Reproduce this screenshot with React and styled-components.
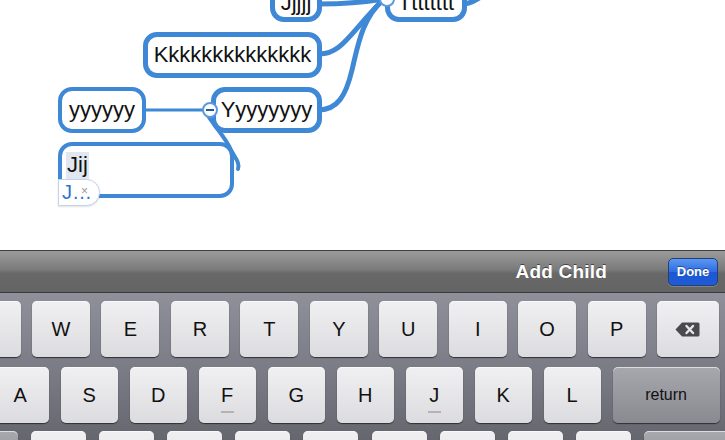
import React from 'react'
import styled, { createGlobalStyle } from 'styled-components'

const GlobalStyle = createGlobalStyle`
  html, body {
    margin: 0;
    padding: 0;
    background: #fff;
    overflow: hidden;
  }
  body {
    font-family: "Liberation Sans", Arial, sans-serif;
  }
`

const BLUE = '#3f88d6'

const Screen = styled.div`
  width: 725px;
  height: 440px;
  display: flex;
  flex-direction: column;
  overflow: hidden;
`

/* ---------- mind map ---------- */

const Canvas = styled.div`
  position: relative;
  height: 250px;
  flex: none;
  background: #fff;
  overflow: hidden;
`

const Wires = styled.svg`
  position: absolute;
  left: 0;
  top: 0;
`

const Node = styled.div`
  position: absolute;
  left: ${p => p.$x}px;
  top: ${p => p.$y}px;
  width: ${p => p.$w}px;
  height: ${p => p.$h}px;
  box-sizing: border-box;
  border: ${p => p.$bw || 5}px solid ${BLUE};
  border-radius: 14px;
  background: #fff;
  display: flex;
  align-items: center;
  justify-content: center;
  font-size: 22px;
  color: #111;
  white-space: nowrap;
`

const EditNode = styled(Node)`
  align-items: flex-start;
  justify-content: flex-start;
  padding: 6px 0 0 4px;
`

const Marked = styled.span`
  background: #e1e7f0;
  padding: 2px 1px 4px;
  line-height: 22px;
`

const Suggestion = styled.div`
  position: absolute;
  left: 58px;
  top: 179px;
  width: 42px;
  height: 27px;
  box-sizing: border-box;
  background: #fff;
  border: 1px solid #c3d3ee;
  border-radius: 0 14px 14px 0;
  box-shadow: 0 1px 2px rgba(0, 0, 0, 0.12);
  color: #2a74d2;
  font-size: 20px;
  padding: 1px 0 0 3px;
  white-space: nowrap;
`

const Dismiss = styled.span`
  position: absolute;
  left: 22px;
  top: 4px;
  font-size: 12px;
  color: #9a9a9a;
`

const Collapse = styled.div`
  position: absolute;
  left: ${p => p.$x - 8}px;
  top: ${p => p.$y - 8}px;
  width: 16px;
  height: 16px;
  box-sizing: border-box;
  border-radius: 50%;
  background: #fff;
  border: 2px solid #5a9ae0;
  &::after {
    content: '';
    position: absolute;
    left: 2px;
    top: 5px;
    width: 8px;
    height: 2px;
    background: #22599a;
  }
`

/* ---------- toolbar ---------- */

const Toolbar = styled.div`
  height: 43px;
  flex: none;
  box-sizing: border-box;
  border-top: 1px solid #3e3e3e;
  border-bottom: 1px solid #3a3a3a;
  background: linear-gradient(#9b9b9b, #7b7b7b 45%, #686868 55%, #646464);
  display: flex;
  align-items: center;
  justify-content: flex-end;
  padding-right: 7px;
`

const Title = styled.div`
  color: #fff;
  font-weight: bold;
  font-size: 19px;
  letter-spacing: 0.2px;
  text-shadow: 0 -1px 0 rgba(0, 0, 0, 0.5);
  margin-right: 61px;
`

const DoneButton = styled.button`
  width: 50px;
  height: 28px;
  box-sizing: border-box;
  border: 1px solid #233f73;
  border-radius: 5px;
  background: linear-gradient(#5c97f3, #2d6be0 50%, #1c58d2 51%, #1e5bd6);
  color: #fff;
  font-family: "Liberation Sans", Arial, sans-serif;
  font-weight: bold;
  font-size: 13px;
  text-shadow: 0 -1px 0 rgba(0, 0, 0, 0.4);
  padding: 0;
  box-shadow: 0 1px 0 rgba(255, 255, 255, 0.2);
`

/* ---------- keyboard ---------- */

const Keyboard = styled.div`
  flex: 1;
  background: linear-gradient(#8f909a, #777881 60%, #65666e);
  padding-top: 8px;
  display: flex;
  flex-direction: column;
  overflow: hidden;
`

const Row = styled.div`
  display: flex;
  gap: ${p => p.$gap}px;
  margin-left: ${p => p.$offset}px;
  margin-bottom: ${p => p.$after}px;
  flex: none;
`

const Key = styled.div`
  position: relative;
  flex: none;
  width: ${p => p.$w}px;
  height: 56px;
  box-sizing: border-box;
  border-radius: 5px;
  background: ${p => p.$dark
    ? 'linear-gradient(#a7a8ae, #898a90)'
    : 'linear-gradient(#f0f0f2, #dcdce0)'};
  box-shadow: 0 1px 1px #303034, inset 0 1px 0 rgba(255, 255, 255, 0.6);
  display: flex;
  align-items: ${p => p.$top ? 'flex-start' : 'center'};
  justify-content: center;
  padding-top: ${p => p.$top ? 5 : 0}px;
  font-size: ${p => p.$small ? 16 : 20}px;
  color: #111;
  &::after {
    content: '';
    display: ${p => p.$mark ? 'block' : 'none'};
    position: absolute;
    left: 50%;
    bottom: 10px;
    width: 13px;
    margin-left: -6px;
    height: 2px;
    background: #b4b4b8;
  }
`

const BackspaceIcon = () => (
  <svg width="25" height="15" viewBox="0 0 25 15">
    <path d="M7 0.5 H23 a1.5 1.5 0 0 1 1.5 1.5 V13 a1.5 1.5 0 0 1 -1.5 1.5 H7 L0.5 7.5 Z" fill="#4a4a4e" />
    <path d="M11.5 4 L18 11 M18 4 L11.5 11" stroke="#e6e6e8" strokeWidth="2.4" strokeLinecap="round" />
  </svg>
)

const rows = [
  {
    offset: -37.4, gap: 11.44, after: 10,
    keys: ['Q', 'W', 'E', 'R', 'T', 'Y', 'U', 'I', 'O', 'P'].map(l => ({ label: l, w: 58 }))
      .concat([{ icon: true, w: 62 }]),
  },
  {
    offset: -8.3, gap: 11.9, after: 8,
    keys: ['A', 'S', 'D', 'F', 'G', 'H', 'J', 'K', 'L'].map(l => ({ label: l, w: 57.1, mark: l === 'F' || l === 'J' }))
      .concat([{ label: 'return', w: 107, dark: true, small: true }]),
  },
  {
    offset: -70, gap: 13.1, after: 0,
    keys: [{ label: '', w: 88, dark: true }]
      .concat(['', '', '', '', '', '', ''].map(l => ({ label: l, w: 55 })))
      .concat([{ label: '!', w: 55, top: true }, { label: '?', w: 55, top: true }, { label: '', w: 90, dark: true }]),
  },
]

export default function App() {
  return (
    <Screen>
      <GlobalStyle />
      <Canvas>
        <Wires width="725" height="250">
          <g fill="none" stroke={BLUE} strokeLinecap="round">
            <path d="M318 4 C340 4, 360 3, 384 -1" strokeWidth="5" />
            <path d="M318 54 C342 55, 350 32, 384 -1" strokeWidth="5" />
            <path d="M318 110 C338 110, 346 95, 352 70 C358 45, 362 18, 384 -1" strokeWidth="5" />
            <path d="M464 4 C472 3, 476 0, 484 -5" strokeWidth="5" />
            <path d="M144 110 L204 110" strokeWidth="3" />
            <path d="M207 114 C214 126, 226 138, 231 150 C235 158, 240 162, 238 169" strokeWidth="4" />
          </g>
        </Wires>
        <Node $x={270} $y={-16} $w={52} $h={38}>Jjjjj</Node>
        <Node $x={385} $y={-16} $w={82} $h={38}>Tttttttt</Node>
        <Node $x={143} $y={32} $w={179} $h={46}>Kkkkkkkkkkkkkk</Node>
        <Node $x={58} $y={87} $w={88} $h={46} $bw={4}>yyyyyy</Node>
        <Node $x={211} $y={87} $w={111} $h={46}>Yyyyyyyy</Node>
        <EditNode $x={58} $y={142} $w={176} $h={56} $bw={4}>
          <Marked>Jij</Marked>
        </EditNode>
        <Suggestion>
          J…
          <Dismiss>×</Dismiss>
        </Suggestion>
        <Collapse $x={210} $y={110} />
        <Collapse $x={387} $y={-1} />
      </Canvas>
      <Toolbar>
        <Title>Add Child</Title>
        <DoneButton>Done</DoneButton>
      </Toolbar>
      <Keyboard>
        {rows.map((row, i) => (
          <Row key={i} $offset={row.offset} $gap={row.gap} $after={row.after}>
            {row.keys.map((k, j) => (
              <Key key={j} $w={k.w} $dark={k.dark} $small={k.small} $mark={k.mark} $top={k.top}>
                {k.icon ? <BackspaceIcon /> : k.label}
              </Key>
            ))}
          </Row>
        ))}
      </Keyboard>
    </Screen>
  )
}
